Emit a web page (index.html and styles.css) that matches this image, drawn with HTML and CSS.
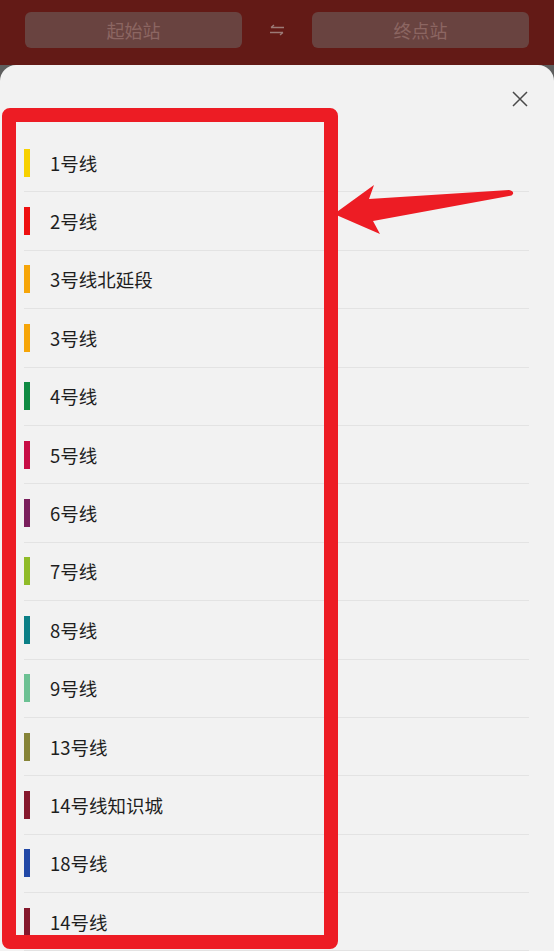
FILE: index.html
```html
<!DOCTYPE html>
<html>
<head>
  <meta charset="UTF-8">
  <title>线路选择</title>
  <link rel="stylesheet" href="styles.css">
</head>
<body>
  <!-- Search bar (dimmed behind the sheet) -->
  <div class="topbar">
    <div class="station">起始站</div>
    <svg class="swap" width="16" height="12" viewBox="0 0 16 12">
      <path d="M15 3.5H2M5 1L2 3.5" fill="none" stroke="#9b7a76" stroke-width="1.4"/>
      <path d="M1 8.5H14M11 11L14 8.5" fill="none" stroke="#9b7a76" stroke-width="1.4"/>
    </svg>
    <div class="station">终点站</div>
  </div>

  <!-- Line picker sheet -->
  <div class="sheet">
    <div class="sheet-head">
      <svg class="close" width="16" height="16" viewBox="0 0 16 16">
        <path d="M1 1L15 15M15 1L1 15" stroke="#4a4a4a" stroke-width="1.5"/>
      </svg>
    </div>
    <ul class="lines">
      <li><span class="bar" style="background:#f7d100"></span>1号线</li>
      <li><span class="bar" style="background:#ee1010"></span>2号线</li>
      <li><span class="bar" style="background:#f6a508"></span>3号线北延段</li>
      <li><span class="bar" style="background:#f6a508"></span>3号线</li>
      <li><span class="bar" style="background:#0e8a42"></span>4号线</li>
      <li><span class="bar" style="background:#c70d45"></span>5号线</li>
      <li><span class="bar" style="background:#7a1f5c"></span>6号线</li>
      <li><span class="bar" style="background:#8fbb28"></span>7号线</li>
      <li><span class="bar" style="background:#0b7f86"></span>8号线</li>
      <li><span class="bar" style="background:#6cc193"></span>9号线</li>
      <li><span class="bar" style="background:#868438"></span>13号线</li>
      <li><span class="bar" style="background:#85182d"></span>14号线知识城</li>
      <li><span class="bar" style="background:#2148a6"></span>18号线</li>
      <li><span class="bar" style="background:#85182d"></span>14号线</li>
    </ul>
  </div>

  <!-- Annotation drawn over the screenshot -->
  <div class="mark-box"></div>
  <svg class="mark-arrow" width="554" height="951" viewBox="0 0 554 951">
    <path d="M334 214L374 185L369 199L509 190Q514 191 513 194Q512 196 509 196L373 221L380 234Z" fill="#ed1c24"/>
  </svg>
</body>
</html>
```

FILE: styles.css
```css
* { box-sizing: border-box; }
html, body { margin: 0; padding: 0; }
body {
  width: 554px;
  height: 951px;
  overflow: hidden;
  position: relative;
  background: #5e5e5e;
  font-family: "Noto Sans CJK SC", "Noto Sans", sans-serif;
}

.topbar {
  height: 65px;
  background: #631a16;
  display: flex;
  align-items: center;
  padding: 0 25px 5px 25px;
}
.station {
  flex: 1;
  height: 36px;
  border-radius: 6px;
  background: #694340;
  color: #8c6662;
  font-size: 18px;
  display: flex;
  align-items: center;
  justify-content: center;
}
.swap { margin: 0 27px; }

.sheet {
  background: #f2f2f2;
  border-radius: 16px 16px 0 0;
  height: 886px;
}
.sheet-head {
  height: 69px;
  display: flex;
  justify-content: flex-end;
  padding: 26px 26px 0 0;
}
.close { display: block; }

.lines {
  list-style: none;
  margin: 0 25px 0 24px;
  padding: 0;
}
.lines li {
  height: 58.4px;
  border-bottom: 1px solid #e3e3e3;
  display: flex;
  align-items: center;
  font-size: 18.5px;
  color: #1e1e1e;
}
.bar {
  width: 6px;
  height: 28px;
  margin-right: 20px;
}

.mark-box {
  position: absolute;
  left: 2px;
  top: 108px;
  width: 336px;
  height: 841px;
  border: 14px solid #ed1c24;
  border-radius: 8px;
}
.mark-arrow {
  position: absolute;
  left: 0;
  top: 0;
}
```
